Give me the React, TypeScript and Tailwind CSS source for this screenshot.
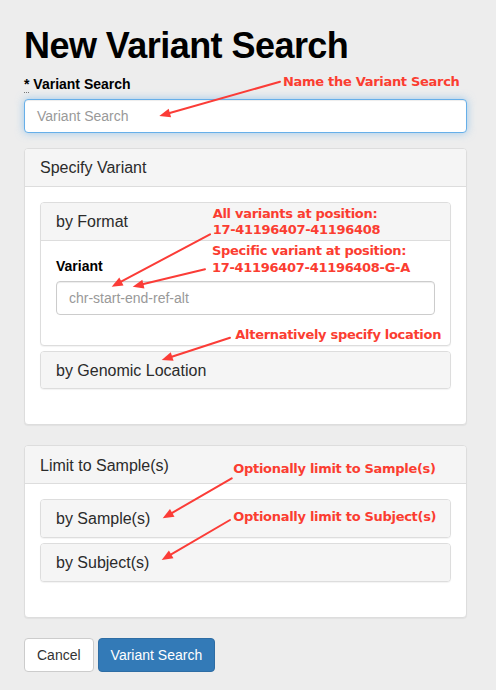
import React from "react";

const Arrow = ({ x1, y1, x2, y2 }: { x1: number; y1: number; x2: number; y2: number }) => {
  const dx = x2 - x1;
  const dy = y2 - y1;
  const len = Math.sqrt(dx * dx + dy * dy);
  const ux = dx / len;
  const uy = dy / len;
  const hl = 11;
  const hw = 4.5;
  const bx = x2 - ux * hl;
  const by = y2 - uy * hl;
  const px = -uy;
  const py = ux;
  return (
    <g>
      <line x1={x1} y1={y1} x2={bx + ux * 2} y2={by + uy * 2} stroke="#fb3c37" strokeWidth={2} strokeLinecap="round" />
      <polygon
        points={`${x2},${y2} ${bx + px * hw},${by + py * hw} ${bx - px * hw},${by - py * hw}`}
        fill="#fb3c37"
      />
    </g>
  );
};

const Note = ({ left, top, children }: { left: number; top: number; children: React.ReactNode }) => (
  <div
    className="absolute whitespace-nowrap text-[13px] leading-none font-bold tracking-[-0.3px] text-[#fb3d31] font-['DejaVu_Sans',sans-serif]"
    style={{ left, top }}
  >
    {children}
  </div>
);

const SubPanel = ({ title, children }: { title: string; children?: React.ReactNode }) => (
  <div className="border border-[#ddd] rounded-[4px] bg-white shadow-[0_1px_1px_rgba(0,0,0,0.05)] overflow-hidden">
    {children ? (
      <div className="h-[38px] bg-[#f5f5f5] border-b border-[#ddd] flex items-center px-[15px] pt-[2px] text-[16px] text-[#2b2b2b]">
        {title}
      </div>
    ) : (
      <div className="h-[36.5px] bg-[#f5f5f5] flex items-center px-[15px] pt-[2px] text-[16px] text-[#2b2b2b]">
        {title}
      </div>
    )}
    {children}
  </div>
);

export default function App() {
  return (
    <div className="relative min-h-[690px] w-[496px] bg-[#ededed] font-['Liberation_Sans',Arial,sans-serif] text-[#333] overflow-hidden">
      <div className="pl-6 w-[467px] pt-[26px]">
        <h1 className="text-[36px] leading-[1.1] font-bold tracking-[-0.55px] text-black">New Variant Search</h1>
        <div className="mt-[8px] mb-[5px] text-[14px] leading-[20px] font-bold text-black">
          <span className="border-b border-dotted border-[#777]">*</span> Variant Search
        </div>
        <div className="h-[34px] rounded-[4px] border border-[#66afe9] bg-white shadow-[inset_0_1px_1px_rgba(0,0,0,0.075),0_0_8px_rgba(102,175,233,0.6)] flex items-center px-3 pt-[2px] text-[14px] text-[#999]">
          Variant Search
        </div>

        <div className="mt-[15px] border border-[#ddd] rounded-[4px] bg-white shadow-[0_1px_1px_rgba(0,0,0,0.05)]">
          <div className="h-[38px] bg-[#f5f5f5] border-b border-[#ddd] rounded-t-[3px] flex items-center px-[15px] pt-[2px] text-[16px] text-[#2b2b2b]">
            Specify Variant
          </div>
          <div className="p-[15px]">
            <div className="flex flex-col gap-[5px] mb-[20px]">
              <SubPanel title="by Format">
                <div className="p-[15px]">
                  <div className="text-[14px] leading-[20px] font-bold text-black mb-[5px]">Variant</div>
                  <div className="h-[34px] rounded-[4px] border border-[#ccc] bg-white shadow-[inset_0_1px_1px_rgba(0,0,0,0.075)] flex items-center px-3 pt-[2px] text-[14px] text-[#999] mb-[15px]">
                    chr-start-end-ref-alt
                  </div>
                </div>
              </SubPanel>
              <SubPanel title="by Genomic Location" />
            </div>
          </div>
        </div>

        <div className="mt-[20px] border border-[#ddd] rounded-[4px] bg-white shadow-[0_1px_1px_rgba(0,0,0,0.05)]">
          <div className="h-[38px] bg-[#f5f5f5] border-b border-[#ddd] rounded-t-[3px] flex items-center px-[15px] pt-[2px] text-[16px] text-[#2b2b2b]">
            Limit to Sample(s)
          </div>
          <div className="p-[15px]">
            <div className="flex flex-col gap-[5.5px] mb-[20px]">
              <SubPanel title="by Sample(s)" />
              <SubPanel title="by Subject(s)" />
            </div>
          </div>
        </div>

        <div className="mt-[20px] flex gap-[4px]">
          <button className="h-[34px] px-3 pt-[1px] rounded-[4px] border border-[#ccc] bg-white text-[14px] text-[#333]">
            Cancel
          </button>
          <button className="h-[34px] px-3 pt-[1px] rounded-[4px] border border-[#2e6da4] bg-[#337ab7] text-[14px] text-white">
            Variant Search
          </button>
        </div>
      </div>

      <svg className="absolute left-0 top-0 pointer-events-none" width={496} height={690}>
        <Arrow x1={280} y1={81.7} x2={159.3} y2={116} />
        <Arrow x1={210} y1={234.3} x2={111.7} y2={286.7} />
        <Arrow x1={205} y1={269.3} x2={132.7} y2={286.7} />
        <Arrow x1={230} y1={337.7} x2={161.7} y2={360} />
        <Arrow x1={231.7} y1={478.3} x2={162.7} y2={518.3} />
        <Arrow x1={230} y1={520} x2={161.7} y2={560} />
      </svg>

      <Note left={283} top={75}>Name the Variant Search</Note>
      <Note left={212.7} top={206.7}>All variants at position:</Note>
      <Note left={212.7} top={223}>17-41196407-41196408</Note>
      <Note left={212} top={244}>Specific variant at position:</Note>
      <Note left={212} top={261.3}>17-41196407-41196408-G-A</Note>
      <Note left={235.3} top={328.3}>Alternatively specify location</Note>
      <Note left={233.3} top={462.3}>Optionally limit to Sample(s)</Note>
      <Note left={233.3} top={510.3}>Optionally limit to Subject(s)</Note>
    </div>
  );
}
